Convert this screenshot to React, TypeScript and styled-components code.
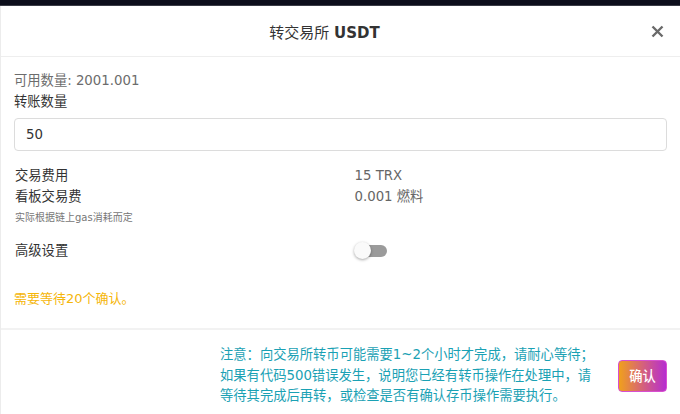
import React from "react";
import styled, { createGlobalStyle } from "styled-components";

const FONT = `"DejaVu Sans", "Noto Sans CJK SC", sans-serif`;

const Global = createGlobalStyle`
  html, body { margin: 0; padding: 0; background: #ffffff; }
  body { font-family: ${FONT}; }
  * { box-sizing: border-box; }
`;

const Page = styled.div`
  width: 680px;
  height: 414px;
  overflow: hidden;
  display: flex;
  flex-direction: column;
  background: #0c0e1b;
`;

const Backdrop = styled.div`
  height: 6px;
  background: #0c0e1b;
  border-bottom: 1px solid #3a3c46;
  flex-shrink: 0;
`;

const Modal = styled.div`
  flex: 1;
  background: #fff;
  border-left: 1px solid #ececec;
  display: flex;
  flex-direction: column;
`;

const Header = styled.div`
  height: 51px;
  padding: 0 14px;
  display: flex;
  align-items: center;
  border-bottom: 1px solid #eeeeee;
`;

const Title = styled.h5`
  flex: 1;
  margin: 0;
  text-align: center;
  font-size: 15px;
  font-weight: 400;
  color: #333;
  & strong { font-weight: 700; }
`;

const CloseBtn = styled.button`
  width: 32px;
  height: 18px;
  border: 0;
  padding: 0 2px 0 0;
  background: transparent;
  display: flex;
  align-items: center;
  justify-content: flex-end;
`;

const Body = styled.div`
  padding: 13px 13px 0 13px;
  display: flex;
  flex-direction: column;
`;

const Muted = styled.div`
  font-size: 13.3px;
  line-height: 21px;
  color: #6c6c6c;
`;

const Label = styled.div`
  font-size: 13.3px;
  line-height: 21px;
  color: #333;
`;

const Input = styled.input`
  margin-top: 6px;
  height: 33px;
  width: 100%;
  border: 1px solid #dcdcdc;
  border-radius: 4px;
  padding: 0 11px;
  font-family: ${FONT};
  font-size: 13.3px;
  color: #333;
  outline: none;
`;

const Row = styled.div`
  display: grid;
  grid-template-columns: 1fr 1fr;
  margin: 0 -13px;
  & > * { padding: 0 13px 0 14px; }
`;

const Fees = styled(Row)`
  margin-top: 14px;
`;

const Note = styled.div`
  font-size: 10px;
  line-height: 16px;
  color: #777;
  margin-top: 3px;
`;

const Value = styled.div`
  font-size: 13.3px;
  line-height: 21px;
  color: #666;
`;

const Advanced = styled(Row)`
  margin-top: 14px;
  align-items: center;
`;

const SwitchWrap = styled.div`
  display: flex;
  align-items: center;
  height: 21px;
`;

const Track = styled.div`
  position: relative;
  width: 29px;
  height: 12px;
  margin-left: 3px;
  border-radius: 6px;
  background: #9b9b9b;
`;

const Knob = styled.div`
  position: absolute;
  left: -4px;
  top: -2.5px;
  width: 17px;
  height: 17px;
  border-radius: 50%;
  background: #fafafa;
  box-shadow: 0 1px 3px rgba(0, 0, 0, 0.35);
`;

const Warning = styled.div`
  margin-top: 28px;
  font-size: 13px;
  line-height: 20px;
  color: #f5b60a;
`;

const Footer = styled.div`
  margin-top: 19px;
  border-top: 2px solid #f2f2f2;
  display: flex;
  justify-content: flex-end;
  align-items: center;
  padding: 15px 13px 0 0;
`;

const Notice = styled.div`
  width: 380px;
  margin-right: 18px;
  font-size: 13.3px;
  line-height: 20.5px;
  color: #1aa1b4;
`;

const Confirm = styled.button`
  width: 49px;
  height: 32px;
  border: 1px solid #d84fd0;
  border-radius: 4px;
  background: linear-gradient(90deg, #f0a01c 0%, #d5627a 50%, #b62dd0 100%);
  color: #fff;
  font-family: ${FONT};
  font-size: 13.3px;
  font-weight: 500;
  padding: 0;
`;

export default function App() {
  return (
    <Page>
      <Global />
      <Backdrop />
      <Modal>
        <Header>
          <Title>
            转交易所 <strong>USDT</strong>
          </Title>
          <CloseBtn aria-label="close">
            <svg width="13" height="13" viewBox="0 0 13 13">
              <path d="M1.5 1.5 L11.5 11.5 M11.5 1.5 L1.5 11.5" stroke="#6a6a6a" strokeWidth="2.4" strokeLinecap="butt" />
            </svg>
          </CloseBtn>
        </Header>
        <Body>
          <Muted>可用数量: 2001.001</Muted>
          <Label>转账数量</Label>
          <Input defaultValue="50" />
          <Fees>
            <div>
              <Label>交易费用</Label>
              <Label>看板交易费</Label>
              <Note>实际根据链上gas消耗而定</Note>
            </div>
            <div>
              <Value>15 TRX</Value>
              <Value>0.001 燃料</Value>
            </div>
          </Fees>
          <Advanced>
            <Label>高级设置</Label>
            <SwitchWrap>
              <Track>
                <Knob />
              </Track>
            </SwitchWrap>
          </Advanced>
          <Warning>需要等待20个确认。</Warning>
        </Body>
        <Footer>
          <Notice>
            注意：向交易所转币可能需要1~2个小时才完成，请耐心等待；如果有代码500错误发生，说明您已经有转币操作在处理中，请等待其完成后再转，或检查是否有确认存币操作需要执行。
          </Notice>
          <Confirm>确认</Confirm>
        </Footer>
      </Modal>
    </Page>
  );
}
